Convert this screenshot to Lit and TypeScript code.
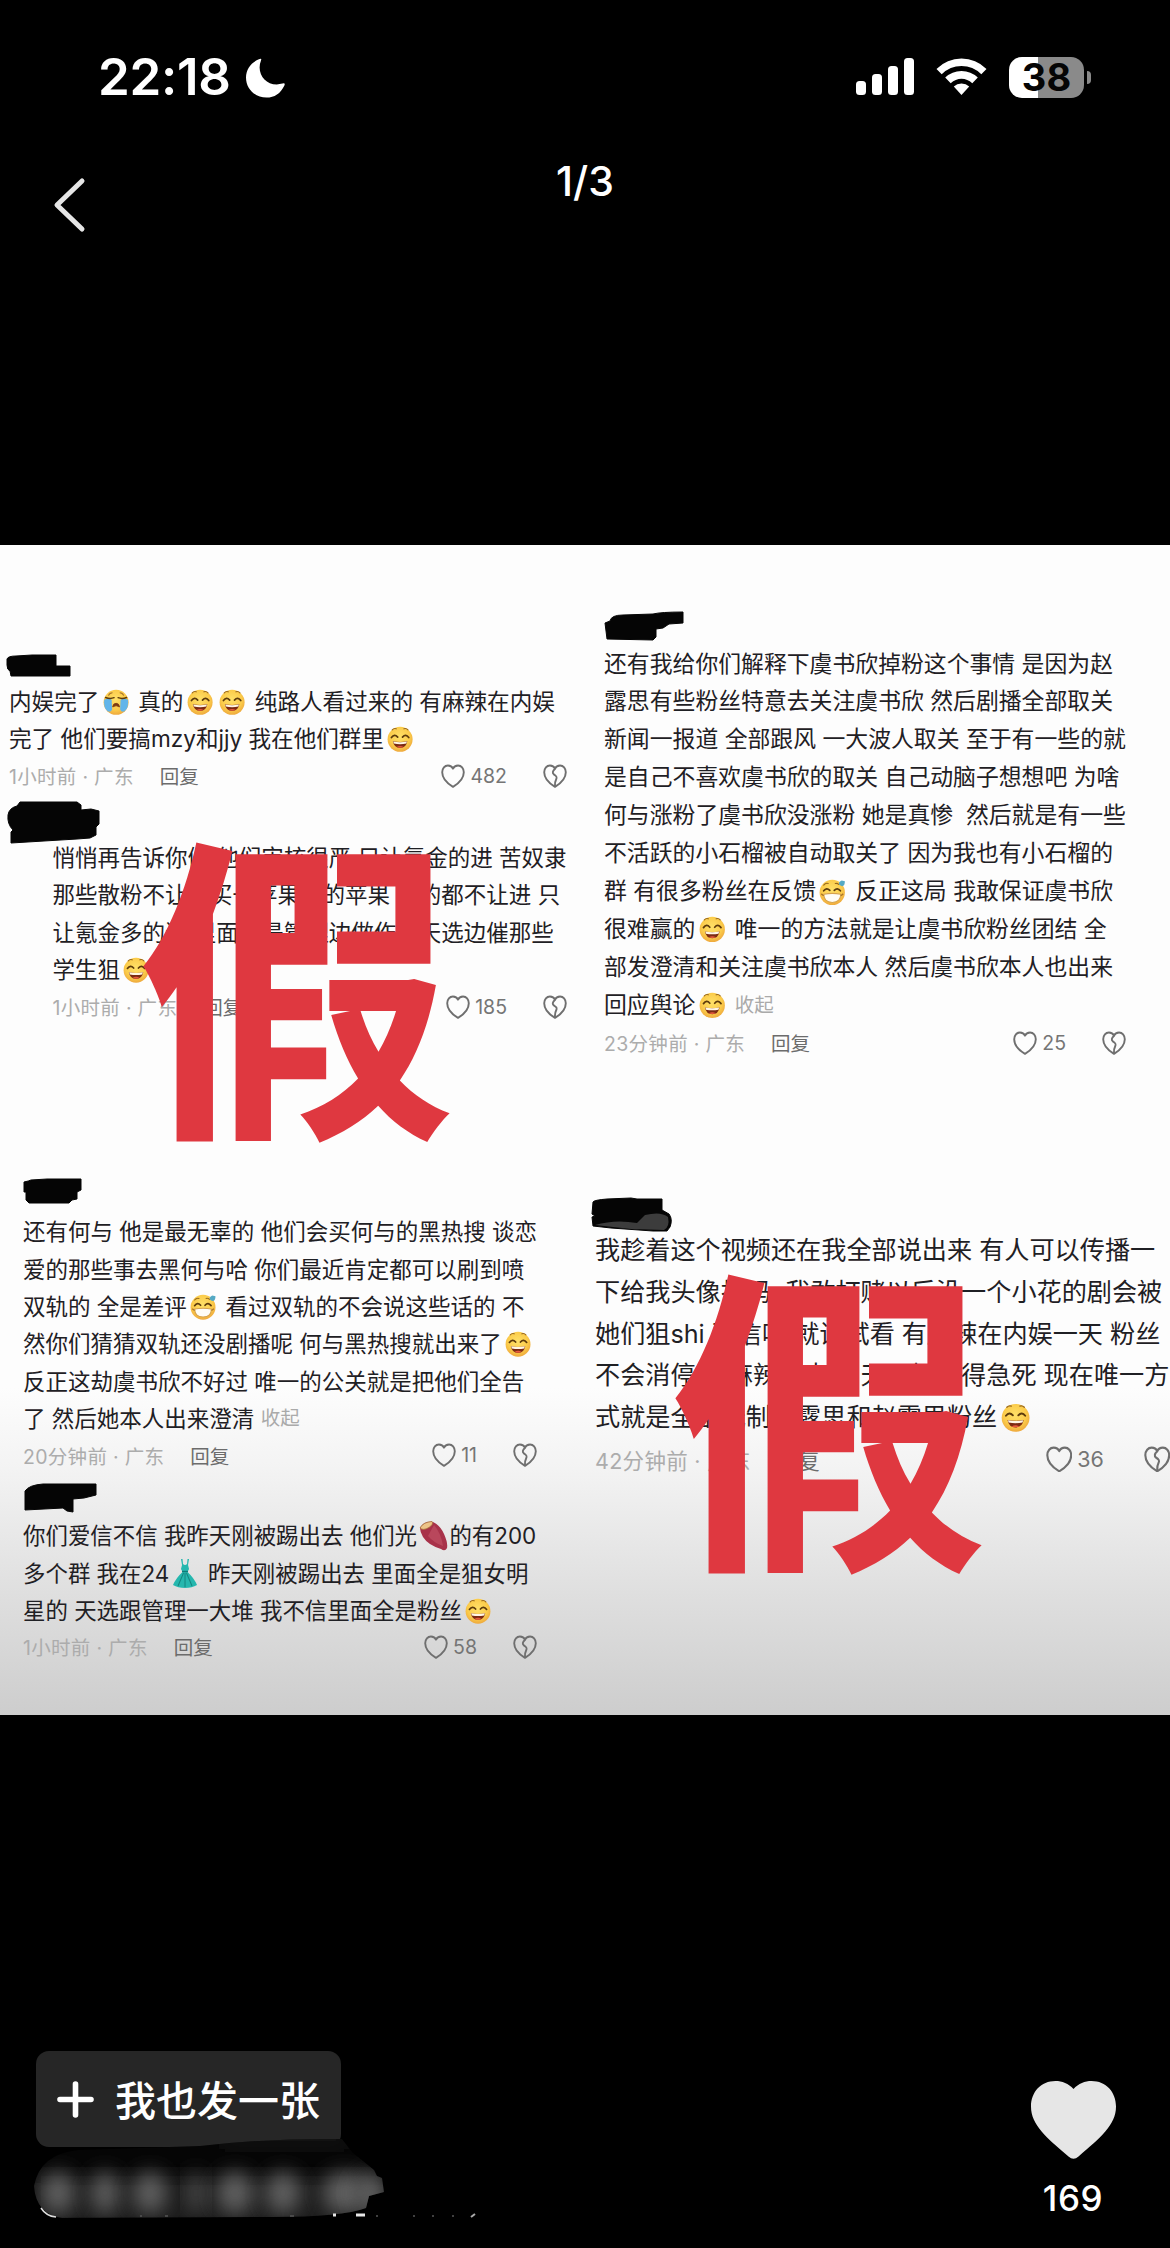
import { LitElement, html, css, svg } from "lit";
import { customElement, property } from "lit/decorators.js";

type Part = string | { e: string } | { fold: string };
interface Comment {
  id: string;
  lines: Part[][];
  time: string;
  likes: string;
}

const grin = { e: "grin" };
const mask = { e: "mask" };
const sob = { e: "sob" };
const yam = { e: "yam" };
const dress = { e: "dress" };

const LEFT: Comment[] = [
  {
    id: "c1",
    lines: [
      ["内娱完了", sob, " 真的", grin, grin, " 纯路人看过来的 有麻辣在内娱"],
      ["完了 他们要搞mzy和jjy 我在他们群里", grin],
    ],
    time: "1小时前 · 广东",
    likes: "482",
  },
  {
    id: "c2",
    lines: [
      ["悄悄再告诉你们 他们审核很严 只让氪金的进 苦奴隶"],
      ["那些散粉不让进买一苹果买的苹果 少的都不让进 只"],
      ["让氪金多的进 里面全是管理边做作业天选边催那些"],
      ["学生狙", grin],
    ],
    time: "1小时前 · 广东",
    likes: "185",
  },
  {
    id: "c3",
    lines: [
      ["还有何与 他是最无辜的 他们会买何与的黑热搜 谈恋"],
      ["爱的那些事去黑何与哈 你们最近肯定都可以刷到喷"],
      ["双轨的 全是差评", mask, " 看过双轨的不会说这些话的 不"],
      ["然你们猜猜双轨还没剧播呢 何与黑热搜就出来了", grin],
      ["反正这劫虞书欣不好过 唯一的公关就是把他们全告"],
      ["了 然后她本人出来澄清 ", { fold: "收起" }],
    ],
    time: "20分钟前 · 广东",
    likes: "11",
  },
  {
    id: "c4",
    lines: [
      ["你们爱信不信 我昨天刚被踢出去 他们光", yam, "的有200"],
      ["多个群 我在24", dress, " 昨天刚被踢出去 里面全是狙女明"],
      ["星的 天选跟管理一大堆 我不信里面全是粉丝", grin],
    ],
    time: "1小时前 · 广东",
    likes: "58",
  },
];

const RIGHT: Comment[] = [
  {
    id: "c5",
    lines: [
      ["还有我给你们解释下虞书欣掉粉这个事情 是因为赵"],
      ["露思有些粉丝特意去关注虞书欣 然后剧播全部取关"],
      ["新闻一报道 全部跟风 一大波人取关 至于有一些的就"],
      ["是自己不喜欢虞书欣的取关 自己动脑子想想吧 为啥"],
      ["何与涨粉了虞书欣没涨粉 她是真惨  然后就是有一些"],
      ["不活跃的小石榴被自动取关了 因为我也有小石榴的"],
      ["群 有很多粉丝在反馈", mask, " 反正这局 我敢保证虞书欣"],
      ["很难赢的", grin, " 唯一的方法就是让虞书欣粉丝团结 全"],
      ["部发澄清和关注虞书欣本人 然后虞书欣本人也出来"],
      ["回应舆论", grin, " ", { fold: "收起" }],
    ],
    time: "23分钟前 · 广东",
    likes: "25",
  },
  {
    id: "c6",
    lines: [
      ["我趁着这个视频还在我全部说出来 有人可以传播一"],
      ["下给我头像打码  我敢打赌以后没一个小花的剧会被"],
      ["她们狙shi 不信吗 就试试看 有麻辣在内娱一天 粉丝"],
      ["不会消停的 麻辣在内娱 天天恨不得急死 现在唯一方"],
      ["式就是全部抵制赵露思和赵露思粉丝", grin],
    ],
    time: "42分钟前 · 广东",
    likes: "36",
  },
];

/* Marker scribbles that hide the user names: width, height, path */
const SCRIBBLES: Record<string, [number, number, string]> = {
  c1: [66, 25, "M1 6Q2 3 10 3L26 2H50V13H64V23H5L4 18Q1 17 1 12Z"],
  c2: [94, 44, "M1 15Q2 8 10 6L13 2H70L74 5V10L84 9L92 11V24L89 27V35L83 38L70 39L4 43V32L6 30Q0 24 1 15Z"],
  c3: [60, 26, "M1 4Q6 3 8 2L24 1H58V12L54 14V21L49 22L46 25H6L3 22V14H1Z"],
  c4: [74, 30, "M2 8Q6 2 20 1H73V12L61 15L50 16V29L44 28L40 25L2 27Z"],
  c5: [82, 30, "M2 12L7 10Q8 4 20 4L50 3Q58 1 80 1V12L66 13L60 17L53 18V26L50 29L4 28Z"],
  c6: [82, 36, "M2 5Q3 3 16 2L40 1L46 2H71V13L78 17Q82 22 79 30L76 34L62 34L20 31L2 29L1 20L4 19L1 17Z"],
};

const FACE = svg`<circle cx="13" cy="13.2" r="12.4" fill="url(#skin)"/>`;
const STICKERS: Record<string, unknown> = {
  grin: svg`${FACE}
    <path d="M5.2 3.8Q7 1.8 9.2 2.8M16.8 2.8Q19 1.8 20.8 3.8" fill="none" stroke="#9a6a1e" stroke-width="1.1" stroke-linecap="round"/>
    <path d="M4.4 11.4Q7.4 7.4 10.6 11M15.4 11Q18.6 7.4 21.6 11.4" fill="none" stroke="#5d3b0c" stroke-width="1.7" stroke-linecap="round"/>
    <path d="M5.8 15.2Q13 16.6 20.2 15.2Q19 21.8 13 21.8Q7 21.8 5.8 15.2Z" fill="#7c2a12"/>
    <path d="M6.2 15.3Q13 16.7 19.8 15.3L19.2 17.4Q13 18.6 6.8 17.4Z" fill="#fff6e4"/>
    <path d="M9.4 20.9Q13 18.6 16.6 20.9Q13 22.4 9.4 20.9Z" fill="#e8593d"/>`,
  mask: svg`${FACE}
    <path d="M4.6 6Q6.4 3.6 9 4.4M16 4.4Q18 3.8 19.4 5.4" fill="none" stroke="#9a6a1e" stroke-width="1.1" stroke-linecap="round"/>
    <path d="M4.6 11.6Q7.4 7.8 10.6 11.2M15 11.2Q18 7.8 21 11.6" fill="none" stroke="#5d3b0c" stroke-width="1.7" stroke-linecap="round"/>
    <path d="M4.8 15Q13 13.2 21.2 15Q21.6 22.6 13 23Q4.4 22.6 4.8 15Z" fill="#fffdf6" stroke="#d6a24c" stroke-width="1"/>
    <path d="M2.2 14.6L4.6 16.4M23.8 14.6L21.4 16.4" stroke="#a8742a" stroke-width="1.3"/>
    <path d="M22.2 1.4L25.4 2.2Q25.4 7 22.6 7Q19.2 6.4 19.6 3.8Q20.4 2 22.2 1.4Z" fill="#55a9c4"/>`,
  sob: svg`${FACE}
    <path d="M1.2 10.6Q5 8.8 8.6 10.6L9 20.6Q7.4 23.6 4.6 22.2Q.2 18.4 1.2 10.6ZM24.8 10.6Q21 8.8 17.4 10.6L17 20.6Q18.6 23.6 21.4 22.2Q25.8 18.4 24.8 10.6Z" fill="#62b5ea"/>
    <path d="M5.4 6.6Q6.6 3.8 9.4 3.8M16.6 3.8Q19.4 3.8 20.6 6.6" fill="none" stroke="#a8742a" stroke-width="1"/>
    <path d="M2.6 8.4Q7 10.2 11 8.6M15 8.6Q19 10.2 23.4 8.4" fill="none" stroke="#5d3b0c" stroke-width="1.5" stroke-linecap="round"/>
    <path d="M9.6 17.8Q10 14.2 13 14.2Q16 14.2 16.4 17.8Q13 15.4 9.6 17.8Z" fill="#7c3b12" stroke="#7c3b12" stroke-width=".8" stroke-linejoin="round"/>`,
  yam: svg`<path d="M0 5Q4-2 13-1Q20 2 24 11Q28 20 27 25Q25 29 21 26Q8 22 3 14Q0 9 0 5Z" fill="#a8324a"/>
    <path d="M14 2Q21 10 23 23Q14 20 8 13Z" fill="#c65a6c" opacity=".55"/>
    <path d="M0 5Q3-1 12-1.5Q14 1 9 4.5Q3 8 0 5Z" fill="#ecc488" stroke="#a56a38" stroke-width=".8"/>`,
  dress: svg`<path d="M9-1L10 5L9 9L10.5 12Q4 18 1 25Q6 28 13 28Q20 28 25 25Q22 18 15.5 12L17 9L16 5L17-1L15.5-1L15 4Q13 6 11 4L10.5-1Z" fill="#25b7ae"/>
    <path d="M11.5 13L6 26M13 13V27M14.5 13L20 26" stroke="#15857f" stroke-width="1"/>
    <path d="M10 11.5H16" stroke="#107a78" stroke-width="1.4"/>`,
};

const HEART = "M12 22.9C8.5 20.8 1.2 15.4 1.2 8.3C1.2 4.2 3.8 1.5 6.900 1.5C9.3 1.5 11.1 2.7 12 4.7C12.900 2.7 14.700 1.5 17.1 1.5C20.2 1.5 22.8 4.2 22.8 8.3C22.8 15.4 15.5 20.8 12 22.9Z";

@customElement("comment-card")
class CommentCard extends LitElement {
  @property({ attribute: false }) data!: Comment;

  static styles = css`
    :host { display: block; }
    .scribble { display: block; filter: blur(0.4px); margin: 0 0 var(--sb, 0) var(--sx, 0); }
    .text, .meta { margin-left: var(--tx, 0); }
    .line { height: var(--lh, 37.4px); line-height: var(--lh, 37.4px); font-size: var(--fs, 22.6px); white-space: pre; color: #1f2024; display: flex; align-items: center; }
    .sticker { width: 1.16em; height: 1.16em; margin: 0 0.14em; overflow: visible; flex: none; }
    .fold { color: #aaa; font-size: var(--ms, 19.5px); }
    .meta { display: flex; align-items: center; height: var(--mh, 36px); font-size: var(--ms, 19.5px); color: #acacac; white-space: pre; }
    .time { letter-spacing: 0.3px; }
    .reply { color: #6c6c6c; margin-left: 26px; flex: 1; }
    .likes { color: #757575; display: flex; align-items: center; gap: 5px; margin-right: calc(var(--icon, 24px) * 1.5); }
    .icon { width: var(--icon, 24px); height: var(--icon, 24px); fill: none; stroke: #6f6f6f; stroke-width: 1.9; stroke-linejoin: round; stroke-linecap: round; }
  `;

  private part(p: Part) {
    if (typeof p === "string") return html`<span>${p}</span>`;
    if ("fold" in p) return html`<span class="fold">${p.fold}</span>`;
    return html`<svg class="sticker" viewBox="0 0 26 26">
      <defs><radialGradient id="skin" cx=".48" cy=".4" r=".62"><stop offset="0" stop-color="#ffe169"/><stop offset=".65" stop-color="#fbcb4a"/><stop offset="1" stop-color="#eda63c"/></radialGradient></defs>
      ${STICKERS[p.e]}</svg>`;
  }

  render() {
    const c = this.data;
    const [w, h, d] = SCRIBBLES[c.id];
    return html`
      <svg class="scribble" width=${w} height=${h} viewBox="0 0 ${w} ${h}">
        <path d=${d} fill="#050505" stroke="#050505" stroke-linejoin="round"/>
        ${c.id === "c6" ? svg`<path d="M4 28Q24 22 46 26L54 18Q70 14 77 20Q79 30 73 33L40 32Z" fill="#3c3c3c"/>` : ""}
      </svg>
      <div class="text">${c.lines.map((l) => html`<div class="line">${l.map((p) => this.part(p))}</div>`)}</div>
      <div class="meta">
        <span class="time">${c.time}</span><span class="reply">回复</span>
        <span class="likes">
          <svg class="icon" viewBox="0 0 24 24"><path d=${HEART}/></svg><span>${c.likes}</span>
        </span>
        <svg class="icon" viewBox="0 0 24 24">
          <path d=${HEART}/><path d="M12 4.7C9.5 7 9.2 9 10.800 10.4C13.4 12 14.4 13 13.2 15.2C12 17.4 11.8 19 12 22"/>
        </svg>
      </div>`;
  }
}

@customElement("app-root")
class AppRoot extends LitElement {
  static styles = css`
    :host { display: block; font-family: Inter, "Noto Sans CJK SC", sans-serif; }
    .page { width: 1170px; height: 2248px; background: #000; color: #fff; display: flex; flex-direction: column; overflow: hidden; }
    .status { height: 154px; box-sizing: border-box; padding: 0 79px 0 98px; display: flex; align-items: center; }
    .clock { font-size: 51px; font-weight: 600; line-height: 60px; letter-spacing: -0.3px; }
    .moon { margin-left: 15px; margin-top: 1px; flex: none; }
    .space { flex: 1; }
    .signal { margin-right: 22px; }
    .wifi { margin-right: 22px; }
    .battery { width: 75px; height: 41px; border-radius: 13px; background: linear-gradient(90deg, #fff 29px, #8a8a8a 29px); color: #050505; font-size: 38px; font-weight: 700; line-height: 41px; text-align: center; }
    .cap { width: 4px; height: 13px; margin-left: 3px; border-radius: 0 5px 5px 0; background: #8a8a8a; }
    .nav { height: 391px; display: grid; grid-template-columns: 1fr auto 1fr; align-items: start; }
    .back { margin: 22px 0 0 52px; }
    .count { font-size: 41px; font-weight: 500; line-height: 48px; margin-top: 3px; }
    .photo { width: 1170px; height: 1170px; flex: none; position: relative; display: grid; grid-template-columns: 585px 585px; overflow: hidden; background: linear-gradient(#fdfdfd 72%, #f3f3f3 79%, #e0e0e0 89%, #cdcdcd 100%); }
    .col { display: flex; flex-direction: column; min-width: 0; }
    .col > * { flex: none; }
    .c1 { margin: 108px 18px 0 6px; --tx: 3px; --sb: 5px; }
    .c2 { margin: 6px 18px 0 7px; --tx: 45.5px; --sb: -5px; --fs: 22.5px; --mh: 37px; }
    .c3 { margin: 153px 48px 0 23px; --lh: 37.3px; --fs: 22.5px; --sb: 9px; }
    .c4 { margin: 10px 48px 0 23px; --lh: 37.5px; --fs: 22.45px; --mh: 34px; --sb: 4px; }
    .c5 { margin: 66px 44px 0 18px; --lh: 37.9px; --fs: 22.85px; --mh: 37px; --sb: 4.5px; --tx: 1px; }
    .c6 { margin: 136px 0 0 6px; --tx: 4px; --lh: 41.6px; --fs: 25.15px; --ms: 21.5px; --mh: 41.6px; --icon: 26.5px; --sb: -3px; }
    .stamp { position: absolute; font-family: "Noto Sans CJK SC", sans-serif; font-weight: 700; font-size: 319px; line-height: 319px; color: #df3840; }
    .one { left: 137px; top: 270px; }
    .two { left: 669px; top: 702px; }
    .footer { flex: 1; display: flex; justify-content: space-between; padding: 336px 42px 0 32px; }
    .button { width: 305px; height: 96px; box-sizing: border-box; margin-left: 4px; padding: 0 0 3px 21px; border-radius: 13px; background: #262626; display: flex; align-items: center; gap: 21px; font-size: 41px; font-weight: 500; white-space: nowrap; }
    .plus { margin-top: 3px; }
    .smear { display: block; margin-top: -9px; position: relative; }
    .like { width: 110px; padding-top: 29px; display: flex; flex-direction: column; align-items: center; }
    .like-count { font-size: 35px; font-weight: 500; line-height: 42px; margin-top: 17px; letter-spacing: 0.6px; }
  `;

  render() {
    const bars = [[0, 23, 14], [16, 16, 21], [32, 8, 29], [48, 0, 37]];
    const blobs = [[26, 22], [73, 18], [118, 22], [164, 8], [203, 24], [251, 23], [312, 28], [338, 20]];
    return html`
      <div class="page">
        <div class="status">
          <span class="clock">22:18</span>
          <svg class="moon" width="40" height="40" viewBox="0 0 40 40"><path d="M13.5 1Q16 0 15 2.4C9.5 16 21 30 36.5 25.6Q39.6 24.6 38.4 27.4C34.5 35.5 28.5 39.5 20.5 39.5C9 39.5 0 31 0 19.5C0 11 5.5 4 13.5 1Z" fill="#fff"/></svg>
          <span class="space"></span>
          <svg class="signal" width="58" height="38" viewBox="0 0 58 38">${bars.map(([x, y, h]) => svg`<rect x=${x} y=${y} width="10" height=${h} rx="3.5" fill="#fff"/>`)}</svg>
          <svg class="wifi" width="51" height="38" viewBox="0 0 51 38">
            <path d="M0.5 11Q11 0.5 25.5 0.5T50.5 11L45.3 16.2Q37 8 25.5 8T5.7 16.2Z" fill="#fff"/>
            <path d="M9.2 19.6Q16 13 25.5 13T41.8 19.6L36.3 25.2Q31.5 20.7 25.5 20.7T14.7 25.2Z" fill="#fff"/>
            <path d="M17.8 28.4Q21 25.6 25.5 25.6T33.2 28.4L25.5 37Z" fill="#fff"/>
          </svg>
          <div class="battery">38</div><span class="cap"></span>
        </div>
        <div class="nav">
          <svg class="back" width="36" height="58" viewBox="0 0 36 58"><path d="M30 5L5 29L30 53" fill="none" stroke="#e6e6e6" stroke-width="5" stroke-linecap="round" stroke-linejoin="round"/></svg>
          <span class="count">1/3</span>
        </div>
        <div class="photo">
          <div class="col">${LEFT.map((c) => html`<comment-card class=${c.id} .data=${c}></comment-card>`)}</div>
          <div class="col">${RIGHT.map((c) => html`<comment-card class=${c.id} .data=${c}></comment-card>`)}</div>
          <span class="stamp one">假</span>
          <span class="stamp two">假</span>
        </div>
        <div class="footer">
          <div>
            <div class="button">
              <svg class="plus" width="37" height="37" viewBox="0 0 37 37"><path d="M18.5 3V34M3 18.5H34" stroke="#fff" stroke-width="5.6" stroke-linecap="round"/></svg>
              <span>我也发一张</span>
            </div>
            <svg class="smear" width="460" height="84" viewBox="0 0 460 84">
              <defs>
                <filter id="soft" x="-80%" y="-80%" width="260%" height="260%"><feGaussianBlur stdDeviation="10"/></filter>
                <clipPath id="edge"><path d="M2 48Q8 16 46 12L168 8Q240 0 310 1L320 14L342 32L345 38L350 40L352 54L337 58L334 70Q310 79 240 79L30 80Q4 76 2 48Z"/></clipPath>
              </defs>
              <g clip-path="url(#edge)">
                <rect width="460" height="84" fill="#050505"/>
                <rect x="0" y="38" width="360" height="50" fill="#1c1c1c" filter="url(#soft)"/>
                <rect x="190" y="-4" width="125" height="10" fill="#222" filter="url(#soft)"/>
                ${blobs.map(([x, r]) => svg`<ellipse cx=${x} cy="55" rx=${r * 0.75} ry="21" fill="#606060" filter="url(#soft)"/>`)}
              </g>
              <path d="M9 70Q14 78 24 79" fill="none" stroke="#ddd" stroke-width="1.5"/>
              <path d="M108 78h2M133 78h3M258 78h4M344 78h2M381 78h2M400 78h2M420 78h2" stroke="#555" stroke-width="1.5"/>
              <path d="M301 77h3M324 77h9" stroke="#e6e6e6" stroke-width="3"/>
              <path d="M439 79l4-3" stroke="#aaa" stroke-width="2"/>
            </svg>
          </div>
          <div class="like">
            <svg width="87" height="80" viewBox="0 0 87 80"><path d="M43.5 9C38.5 3.5 32 1 25.5 1C11 1 1 12 1 26.5C1 45 17 58 38.5 76.5Q43.5 81 48.5 76.5C70 58 86 45 86 26.5C86 12 76 1 61.5 1C55 1 48.5 3.5 43.5 9Z" fill="#e6e6e6"/></svg>
            <span class="like-count">169</span>
          </div>
        </div>
      </div>`;
  }
}
